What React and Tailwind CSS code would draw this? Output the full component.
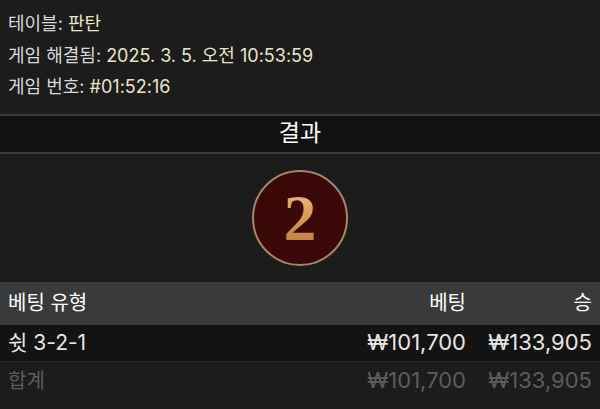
import React from 'react'

const font = { fontFamily: 'Inter, "Noto Sans CJK KR", sans-serif' }

const InfoLine = ({ label, value }) => (
  <div className="leading-[31.5px]">
    <span className="text-[#d9d9d9]">{label}: </span>
    <span className="text-[#e9e4c6]">{value}</span>
  </div>
)

const Row = ({ type, bet, win, className, numClass = 'text-[22px]' }) => (
  <div className={`flex items-center px-2 ${className}`}>
    <div className="flex-1">{type}</div>
    <div className={`w-[120px] text-right ${numClass}`}>{bet}</div>
    <div className={`w-[126px] text-right ${numClass}`}>{win}</div>
  </div>
)

export default function App() {
  return (
    <div className="w-[600px] h-[409px] overflow-hidden bg-[#1c1c1c]" style={font}>
      <div className="px-2 pt-2 pb-[11px] text-[18px]">
        <InfoLine label="테이블" value="판탄" />
        <InfoLine label="게임 해결됨" value="2025. 3. 5. 오전 10:53:59" />
        <InfoLine label="게임 번호" value="#01:52:16" />
      </div>

      <div className="h-[40px] border-y-2 border-[#3a3a3a] bg-[#111111] flex items-center justify-center text-[23px] text-white">
        결과
      </div>

      <div className="flex justify-center py-4">
        <div className="w-[96px] h-[96px] rounded-full border-2 border-[#a3866c] bg-[#3b0808] flex items-center justify-center">
          <span
            className="text-[66px] font-bold leading-none bg-gradient-to-b from-[#f2c27e] via-[#d69a52] to-[#b97a36] bg-clip-text text-transparent"
            style={{ fontFamily: '"Liberation Serif", serif' }}
          >
            2
          </span>
        </div>
      </div>

      <div className="text-[20px]">
        <Row type="베팅 유형" bet="베팅" win="승" numClass="text-[20px]" className="h-[43px] bg-[#3a3a3a] text-white" />
        <Row type={<span className="text-[21px]">쉿 3-2-1</span>} bet="₩101,700" win="₩133,905" className="h-[37px] bg-[#131313] text-[#e6e6e6] border-b border-[#2c2c2c]" />
        <Row type="합계" bet="₩101,700" win="₩133,905" className="h-[38px] text-[#5c5c5c]" />
      </div>
    </div>
  )
}
